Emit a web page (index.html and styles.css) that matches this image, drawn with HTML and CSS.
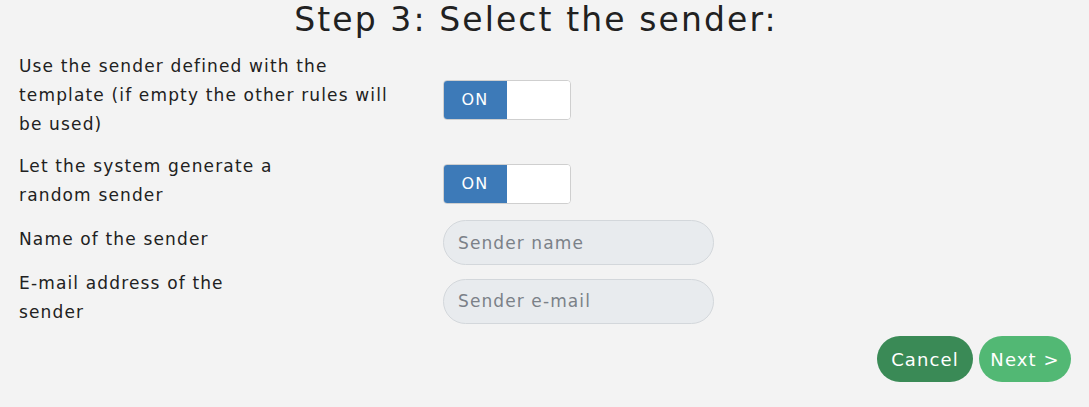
FILE: index.html
```html
<!DOCTYPE html>
<html>
<head>
<meta charset="utf-8">
<link rel="stylesheet" href="styles.css">
</head>
<body>
<div class="page">
  <h1 class="title">Step 3: Select the sender:</h1>
  <div class="rows">
    <div class="row row-1">
      <div class="label">Use the sender defined with the<br>template (if empty the other rules will<br>be used)</div>
      <div class="control">
        <div class="toggle"><span class="toggle-on">ON</span><span class="toggle-off"></span></div>
      </div>
    </div>
    <div class="row row-2">
      <div class="label">Let the system generate a<br>random sender</div>
      <div class="control">
        <div class="toggle"><span class="toggle-on">ON</span><span class="toggle-off"></span></div>
      </div>
    </div>
    <div class="row row-3">
      <div class="label">Name of the sender</div>
      <div class="control">
        <input class="field" type="text" placeholder="Sender name">
      </div>
    </div>
    <div class="row row-4">
      <div class="label">E-mail address of the<br>sender</div>
      <div class="control">
        <input class="field" type="text" placeholder="Sender e-mail">
      </div>
    </div>
  </div>
  <div class="actions">
    <button class="btn btn-cancel">Cancel</button>
    <button class="btn btn-next">Next &gt;</button>
  </div>
</div>
</body>
</html>
```
FILE: styles.css
```css
html, body {
  margin: 0;
  padding: 0;
  background: #f3f3f3;
}
body {
  font-family: "DejaVu Sans", "Open Sans", sans-serif;
  color: #212121;
}
.page {
  width: 1089px;
  height: 407px;
  box-sizing: border-box;
  padding: 0 18px 0 19px;
}
.title {
  margin: 0 18px 0 0;
  padding-top: 0;
  text-align: center;
  font-weight: 400;
  font-size: 33px;
  line-height: 40px;
  color: #212121;
  letter-spacing: 2.1px;
}
.rows {
  display: flex;
  flex-direction: column;
  margin-top: 12px;
}
.row {
  display: grid;
  grid-template-columns: 424px 1fr;
  align-items: center;
}
.label {
  font-size: 17px;
  line-height: 29px;
  letter-spacing: 1.15px;
  white-space: nowrap;
}
.row-1 { height: 86px; }
.row-2 { height: 60px; margin-top: 12px; }
.row-2 .label { margin-top: 2px; }
.row-3 { height: 45px; margin-top: 10px; }
.row-3 .label { margin-top: -6px; }
.row-4 { height: 58px; margin-top: 7px; }
.row-4 .label { margin-top: -7px; }
.toggle {
  display: flex;
  width: 128px;
  height: 40px;
  box-sizing: border-box;
  border: 1px solid #cfcfcf;
  border-radius: 4px;
  overflow: hidden;
  background: #fff;
}
.row-1 .toggle { margin-top: 8px; }
.row-2 .toggle { margin-top: 7px; }
.toggle-on {
  width: 64px;
  margin: -1px 0 -1px -1px;
  background: #3d7ab8;
  color: #fff;
  font-size: 16px;
  letter-spacing: 1.2px;
  display: flex;
  align-items: center;
  justify-content: center;
}
.toggle-off {
  flex: 1;
  background: #fff;
}
.field {
  display: block;
  width: 271px;
  height: 45px;
  box-sizing: border-box;
  border: 1px solid #d3d7db;
  border-radius: 23px;
  background: #e8ebee;
  padding: 0 14px;
  font-family: "DejaVu Sans", "Open Sans", sans-serif;
  font-size: 17px;
  letter-spacing: 1.1px;
  color: #212121;
  outline: none;
}
.field::placeholder {
  color: #7b8188;
}
.actions {
  display: flex;
  justify-content: flex-end;
  gap: 6px;
  margin-top: 6px;
}
.btn {
  height: 46px;
  border: none;
  border-radius: 23px;
  padding: 0;
  font-family: "DejaVu Sans", "Open Sans", sans-serif;
  font-size: 18px;
  letter-spacing: 1.1px;
  color: #fff;
}
.btn-cancel {
  background: #3a8a56;
  width: 96px;
}
.btn-next {
  background: #52b874;
  width: 92px;
}
```
